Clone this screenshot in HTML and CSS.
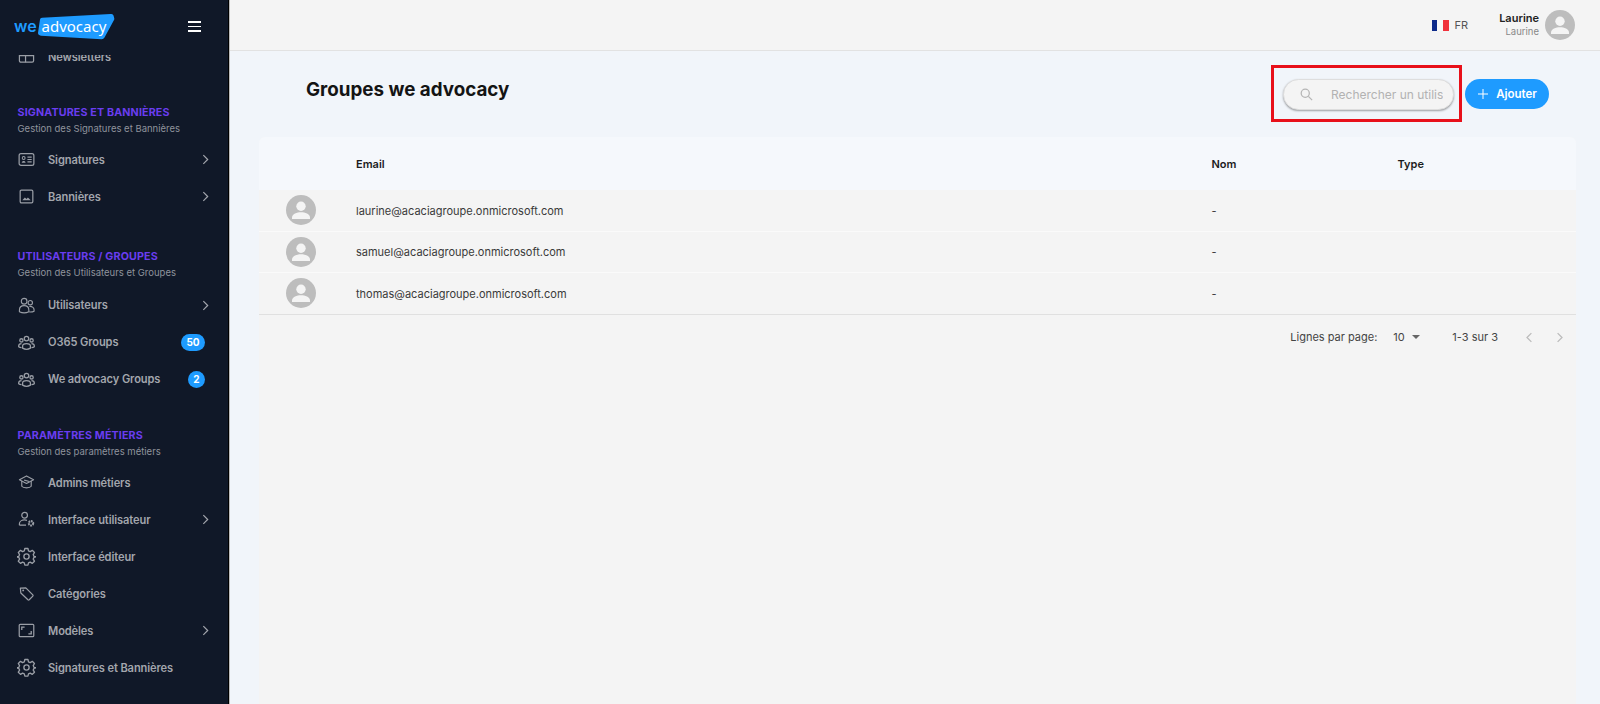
FILE: index.html
```html
<!DOCTYPE html>
<html lang="fr">
<head>
<meta charset="utf-8">
<title>Groupes we advocacy</title>
<link rel="stylesheet" href="styles.css">
</head>
<body>
<svg class="defs" width="0" height="0" aria-hidden="true">
  <defs>
    <symbol id="chev" viewBox="0 0 24 24"><path d="M8 4l8 8-8 8" fill="none" stroke="currentColor" stroke-width="2.200"/></symbol>
    <symbol id="team" viewBox="0 0 24 24"><g fill="none" stroke="currentColor" stroke-width="1.800"><circle cx="12" cy="6.500" r="3.200"/><circle cx="4.800" cy="9" r="2.300"/><circle cx="19.200" cy="9" r="2.300"/><path d="M6.500 20v-3c0-2.300 2.400-3.500 5.500-3.500s5.500 1.200 5.500 3.500v3c-3.500 2-7.500 2-11 0z"/><path d="M5 13.500c-2.400.2-4 1.300-4 3v1.500c1 .8 2.500 1.200 4 1.300M19 13.500c2.400.2 4 1.300 4 3v1.500c-1 .8-2.500 1.200-4 1.300"/></g></symbol>
    <symbol id="gear" viewBox="0 0 24 24"><g fill="none" stroke="currentColor" stroke-width="1.700" stroke-linejoin="round"><circle cx="12" cy="12" r="3.300"/><path d="M10 1.800h4l.7 3 2.200 1 2.700-1.600 2.800 2.800-1.600 2.700.9 2.200 3 .7 0 0-3 .7-.9 2.200 1.600 2.700-2.800 2.800-2.700-1.600-2.200 1-.7 2.800h-4l-.7-2.800-2.200-1-2.700 1.600-2.800-2.800 1.600-2.700-.9-2.200-3-.7 3-.7.9-2.200-1.600-2.700 2.800-2.800 2.700 1.600 2.200-1z" transform="translate(.1 .1) scale(.98)"/></g></symbol>
    <symbol id="person" viewBox="0 0 30 30"><circle cx="15" cy="15" r="15" fill="#bdbdbd"/><circle cx="15" cy="11.300" r="4.700" fill="#f4f4f4"/><path d="M6 22.500c0-3.500 5-5.200 9-5.200s9 1.700 9 5.200V24H6z" fill="#f4f4f4"/></symbol>
  </defs>
</svg>

<div class="app">
  <aside class="sidebar">
    <header class="brand">
      <svg class="logo" width="102" height="26" viewBox="0 0 102 26" role="img" aria-label="we advocacy">
        <path d="M26 5.500q.2-1.500 2-1.700L96.500 0q2.500-.2 3 1.500l.7 2.500q.3 1-.2 2L90.500 23.500q-1 1.800-3 1.700L27 21.700q-3.500-.2-2.900-3.500z" fill="#1e9bff"/>
        <text class="logo-we" x="0" y="17.500">we</text>
        <text class="logo-adv" x="27.500" y="17.500">advocacy</text>
      </svg>
      <span class="burger"><i></i><i></i><i></i></span>
    </header>

    <nav class="nav">
      <a class="item clipped">
        <svg class="ico" viewBox="0 0 18 18"><rect x="1.500" y="3" width="15" height="12" rx="1.500" fill="none" stroke="currentColor" stroke-width="1.300"/><path d="M1.500 8h15M8 8v7" stroke="currentColor" stroke-width="1.300"/></svg>
        <span class="label">Newsletters</span>
      </a>

      <section class="group first">
        <h3>SIGNATURES ET BANNIÈRES</h3>
        <p>Gestion des Signatures et Bannières</p>
      </section>
      <a class="item">
        <svg class="ico" viewBox="0 0 18 18"><rect x="1.200" y="2.800" width="15.600" height="12.400" rx="2" fill="none" stroke="currentColor" stroke-width="1.300"/><path d="M4 12.500c0-1.400 1-2 2-2s2 .6 2 2z" fill="currentColor"/><circle cx="6" cy="7.400" r="1.500" fill="none" stroke="currentColor" stroke-width="1.100"/><path d="M10 6.500h4.500M10 9h4.500M10 11.500h4.500" stroke="currentColor" stroke-width="1.100"/></svg>
        <span class="label">Signatures</span>
        <svg class="chev"><use href="#chev"/></svg>
      </a>
      <a class="item">
        <svg class="ico" viewBox="0 0 18 18"><rect x="2.300" y="2.300" width="13.400" height="13.400" rx="1.300" fill="none" stroke="currentColor" stroke-width="1.300"/><path d="M4.500 13l2.800-3 1.700 1.600 1.500-1.600 3 3z" fill="currentColor"/></svg>
        <span class="label">Bannières</span>
        <svg class="chev"><use href="#chev"/></svg>
      </a>

      <section class="group">
        <h3>UTILISATEURS / GROUPES</h3>
        <p>Gestion des Utilisateurs et Groupes</p>
      </section>
      <a class="item">
        <svg class="ico" viewBox="0 0 18 18"><g fill="none" stroke="currentColor" stroke-width="1.200"><circle cx="6.500" cy="4.500" r="3"/><circle cx="13" cy="6" r="2.300"/><path d="M1.500 14c0-3 2.300-4.800 5-4.800s5 1.800 5 4.800v1.500c-3 1.500-7 1.500-10 0z"/><path d="M12 10c2.600-.4 5 1.200 5 3.500v1.500c-1 .6-3 .9-5 .8"/></g></svg>
        <span class="label">Utilisateurs</span>
        <svg class="chev"><use href="#chev"/></svg>
      </a>
      <a class="item">
        <svg class="ico"><use href="#team"/></svg>
        <span class="label">O365 Groups</span>
        <span class="badge wide">50</span>
      </a>
      <a class="item">
        <svg class="ico"><use href="#team"/></svg>
        <span class="label">We advocacy Groups</span>
        <span class="badge">2</span>
      </a>

      <section class="group tight">
        <h3>PARAMÈTRES MÉTIERS</h3>
        <p>Gestion des paramètres métiers</p>
      </section>
      <a class="item">
        <svg class="ico" viewBox="0 0 18 18"><g fill="none" stroke="currentColor" stroke-width="1.200" stroke-linejoin="round"><path d="M9 2L1.500 6 9 10l7.500-4z"/><path d="M4 7.500v5.500c1.500 2.200 8.500 2.200 10 0V7.500"/><path d="M6.500 6.500L12 8"/></g></svg>
        <span class="label">Admins métiers</span>
      </a>
      <a class="item">
        <svg class="ico" viewBox="0 0 18 18"><g fill="none" stroke="currentColor" stroke-width="1.300"><circle cx="7" cy="4.500" r="3"/><path d="M1.500 15v-1.500c0-2.500 2.800-4 5.500-4 1 0 1.800.2 2.500.4M1.500 15h7"/></g><circle cx="13.800" cy="13" r="2.300" fill="none" stroke="currentColor" stroke-width="2.200" stroke-dasharray="1.700 .7"/></svg>
        <span class="label">Interface utilisateur</span>
        <svg class="chev"><use href="#chev"/></svg>
      </a>
      <a class="item">
        <svg class="ico big"><use href="#gear"/></svg>
        <span class="label">Interface éditeur</span>
      </a>
      <a class="item">
        <svg class="ico" viewBox="0 0 18 18"><path d="M2.500 3.200l5.800-.2 7.400 7.500q.6.700 0 1.300l-3.800 3.800q-.7.600-1.400 0L3 8.500z" fill="none" stroke="currentColor" stroke-width="1.300" stroke-linejoin="round"/><circle cx="5.500" cy="5.700" r="1" fill="currentColor"/></svg>
        <span class="label">Catégories</span>
      </a>
      <a class="item">
        <svg class="ico" viewBox="0 0 18 18"><rect x="1.300" y="2.500" width="15.400" height="13" rx="1" fill="none" stroke="currentColor" stroke-width="1.300"/><path d="M4 8.500V5.500h3M14 9.500v3h-3" fill="none" stroke="currentColor" stroke-width="1.400"/></svg>
        <span class="label">Modèles</span>
        <svg class="chev"><use href="#chev"/></svg>
      </a>
      <a class="item">
        <svg class="ico big"><use href="#gear"/></svg>
        <span class="label">Signatures et Bannières</span>
      </a>
    </nav>
  </aside>

  <div class="main">
    <header class="topbar">
      <span class="lang">
        <span class="flag"><i class="blue"></i><i class="white"></i><i class="red"></i></span>
        FR
      </span>
      <span class="user">
        <span class="user-text"><b>Laurine</b><small>Laurine</small></span>
        <svg class="avatar"><use href="#person"/></svg>
      </span>
    </header>

    <main class="content">
      <div class="page-head">
        <h1>Groupes we advocacy</h1>
        <div class="actions">
          <div class="highlight">
            <label class="search">
              <svg class="search-ico" viewBox="0 0 24 24"><circle cx="10" cy="10" r="6.500" fill="none" stroke="currentColor" stroke-width="2"/><path d="M15 15l6 6" stroke="currentColor" stroke-width="2"/></svg>
              <input type="text" placeholder="Rechercher un utilisateur">
            </label>
          </div>
          <button class="add" type="button">
            <svg viewBox="0 0 24 24"><path d="M12 2v20M2 12h20" stroke="currentColor" stroke-width="2"/></svg>
            Ajouter
          </button>
        </div>
      </div>

      <div class="card">
        <table class="table">
          <thead>
            <tr><th class="c-av"></th><th class="c-mail">Email</th><th class="c-nom">Nom</th><th>Type</th></tr>
          </thead>
          <tbody>
            <tr><td class="c-av"><svg class="avatar"><use href="#person"/></svg></td><td>laurine@acaciagroupe.onmicrosoft.com</td><td>-</td><td></td></tr>
            <tr><td class="c-av"><svg class="avatar"><use href="#person"/></svg></td><td>samuel@acaciagroupe.onmicrosoft.com</td><td>-</td><td></td></tr>
            <tr><td class="c-av"><svg class="avatar"><use href="#person"/></svg></td><td>thomas@acaciagroupe.onmicrosoft.com</td><td>-</td><td></td></tr>
          </tbody>
        </table>
        <div class="pager">
          <span>Lignes par page:</span>
          <span class="size">10<i class="caret"></i></span>
          <span class="range">1-3 sur 3</span>
          <svg class="pg" viewBox="0 0 24 24"><path d="M15 5l-7 7 7 7" fill="none" stroke="currentColor" stroke-width="2"/></svg>
          <svg class="pg" viewBox="0 0 24 24"><path d="M9 5l7 7-7 7" fill="none" stroke="currentColor" stroke-width="2"/></svg>
        </div>
      </div>
    </main>
  </div>
</div>
</body>
</html>
```

FILE: styles.css
```css
* { box-sizing: border-box; }
html, body { margin: 0; height: 100%; }
body {
  font-family: Inter, "Noto Sans", "Liberation Sans", sans-serif;
  color: #222;
  overflow: hidden;
  background: #f1f5fa;
}
.defs { position: absolute; }
.app { display: grid; grid-template-columns: 229px 1fr; height: 704px; }

/* sidebar */
.sidebar {
  background: #101828;
  border-right: 1px solid #000;
  box-shadow: 1px 0 0 #bbb;
  display: flex;
  flex-direction: column;
  height: 704px;
  overflow: hidden;
  position: relative;
  z-index: 1;
}
.brand {
  height: 55px;
  flex: none;
  display: flex;
  align-items: center;
  justify-content: space-between;
  padding: 0 27px 2px 14px;
  background: #101828;
  position: relative;
  z-index: 1;
}
.logo-we { font: 600 16px Inter, sans-serif; fill: #1e9bff; }
.logo-adv { font: 400 15px "Noto Sans", sans-serif; fill: #fff; }
.burger { display: flex; flex-direction: column; gap: 3px; width: 13px; }
.burger i { height: 1.500px; background: #fff; display: block; }
.nav { flex: 1; min-height: 0; }
.item {
  height: 37px;
  display: flex;
  align-items: center;
  padding: 0 17px 0 18px;
  color: #a3a6ad;
  font-size: 11.100px;
  letter-spacing: -.1px;
  font-weight: 600;
}
.item.clipped { margin-top: -17px; }
.ico { width: 17px; height: 17px; flex: none; margin-right: 13px; color: #9a9ea6; }
.ico.big { width: 19px; height: 19px; margin: 0 12px 0 -1px; }
.label { flex: 1; white-space: nowrap; }
.chev { width: 13px; height: 13px; color: #a3a6ad; flex: none; margin-right: -1px; }
.badge {
  background: #1e9bff;
  color: #fff;
  font-size: 10px;
  font-weight: 700;
  letter-spacing: 0;
  min-width: 17px;
  height: 17px;
  border-radius: 9px;
  display: flex;
  align-items: center;
  justify-content: center;
  margin-right: 6px;
}
.badge.wide { min-width: 24px; }
.group { padding: 0 0 6.500px 17.500px; margin-top: 34.300px; }
.group.first { margin-top: 29.500px; padding-bottom: 5.500px; }
.group.tight { margin-top: 30px; padding-bottom: 5.500px; }
.group h3 {
  margin: 0;
  color: #6a3df0;
  font-size: 10.700px;
  line-height: 16px;
  font-weight: 700;
  letter-spacing: .15px;
}
.group p {
  margin: 0;
  color: #8f939c;
  font-size: 9.500px;
  line-height: 15px;
}

/* main */
.main { display: flex; flex-direction: column; min-width: 0; }
.topbar {
  height: 51px;
  flex: none;
  background: #f4f4f4;
  border-bottom: 1px solid #e2e2e2;
  display: flex;
  align-items: center;
  justify-content: flex-end;
  padding-right: 25px;
  gap: 31px;
}
.lang { display: flex; align-items: center; gap: 6px; font-size: 11px; color: #555; }
.flag { display: flex; width: 17px; height: 11px; }
.flag i { flex: 1; display: block; }
.blue { background: #0d2a8a; }
.white { background: #f7f7f7; }
.red { background: #f0323c; }
.user { display: flex; align-items: center; gap: 6px; }
.user-text { display: flex; flex-direction: column; align-items: flex-end; line-height: 14px; }
.user-text b { font-size: 11px; font-weight: 600; color: #222; }
.user-text small { font-size: 9.500px; color: #888; }
.avatar { width: 30px; height: 30px; display: block; }

.content { flex: 1; min-height: 0; padding: 0 24px 0 30px; display: flex; flex-direction: column; }
.page-head {
  height: 86px;
  flex: none;
  display: flex;
  justify-content: space-between;
  align-items: flex-start;
}
.page-head h1 {
  margin: 26px 0 0 47px;
  font-size: 18.800px;
  line-height: 26px;
  font-weight: 700;
  color: #141414;
}
.actions { display: flex; align-items: flex-start; gap: 3px; margin-top: 14px; margin-right: 27px; }
.highlight {
  border: 3px solid #e8101a;
  padding: 11px 5px 7px 9px;
  height: 57px;
}
.search {
  width: 171px;
  height: 31px;
  border-radius: 16px;
  background: #f4f4f4;
  border: 1px solid #dedede;
  box-shadow: 0 1px 2px rgba(0,0,0,.35);
  display: flex;
  align-items: center;
  padding-left: 15px;
  gap: 17px;
}
.search-ico { width: 15px; height: 15px; color: #b5b5b5; flex: none; }
.search input {
  border: 0;
  background: none;
  outline: 0;
  width: 112px;
  padding: 0;
  font: 400 12px Inter, sans-serif;
}
.search input::placeholder { color: #b2b2b2; opacity: 1; }
.add {
  width: 84px;
  height: 30px;
  border: 0;
  border-radius: 15px;
  background: #1e9bff;
  color: #fff;
  font: 600 11.500px Inter, sans-serif;
  display: flex;
  align-items: center;
  justify-content: center;
  gap: 7px;
  padding: 0;
  margin-top: 14px;
}
.add svg { width: 12px; height: 12px; }

.card { flex: 1; background: #f4f4f4; border-radius: 6px 6px 0 0; min-height: 0; }
.table { width: 100%; border-collapse: collapse; table-layout: fixed; }
.table thead tr { background: #f5f8fc; height: 53px; }
.table th {
  text-align: left;
  font-size: 11px;
  font-weight: 600;
  color: #1c1c1c;
  padding: 0;
}
.table th:first-child { border-top-left-radius: 6px; }
.table th:last-child { border-top-right-radius: 6px; }
.c-av { width: 97px; }
.c-nom { width: 186px; }
.table th.c-mail { width: 855.500px; }
.table td {
  height: 41px;
  font-size: 11px;
  color: #3a3a3a;
  padding: 1px 0 0;
  border-bottom: 1px solid #fafafa;
}
.table tr:last-child td { height: 42px; border-bottom: 1px solid #e0e0e0; }
.table td.c-av { padding: 0 0 0 27px; }
.pager {
  height: 45px;
  display: flex;
  align-items: center;
  justify-content: flex-end;
  font-size: 11px;
  color: #444;
  padding-right: 9px;
}
.size { display: flex; align-items: center; margin-left: 16px; width: 36px; }
.caret {
  margin-left: 7px;
  border: 4px solid transparent;
  border-top: 4px solid #666;
  border-bottom: 0;
}
.range { margin-left: 23px; margin-right: 24px; }
.pg { width: 15px; height: 15px; color: #bbb; }
.pg + .pg { margin-left: 15px; }
```
